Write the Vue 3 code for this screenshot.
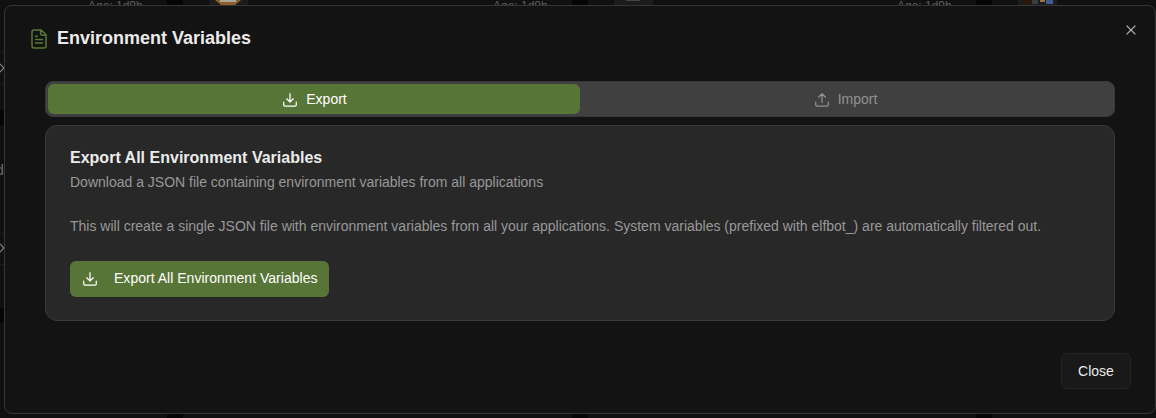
<script setup>
const columns = [
  { id: 'orange' },
  { id: 'grey' },
  { id: 'blocks' },
]
</script>

<template>
  <div class="page">
    <div class="backdrop" aria-hidden="true">
      <div v-for="(c, i) in columns" :key="c.id" class="column" :class="c.id">
        <span class="age">Age: 1d9h</span>
        <i class="gap"></i>
        <i class="thumb">
          <svg v-if="i === 0" width="26" height="6" viewBox="0 0 26 6"><path d="M0 0H26L20 5H6Z" fill="#8b6129" /><path d="M5 0H21V2H5Z" fill="#aaa59b" /></svg>
          <svg v-else-if="i === 1" width="14" height="6" viewBox="0 0 14 6"><path d="M0 .5H14" stroke="#444" /></svg>
          <svg v-else width="30" height="6" viewBox="0 0 30 6"><path d="M0 0H7V4H0Z" fill="#321509" /><path d="M8 0H14V4H8Z" fill="#344144" /><path d="M16 0H21V2H16Z" fill="#91763c" /><path d="M22 0H29V4H22Z" fill="#425994" /></svg>
        </i>
        <i class="gap low"></i>
      </div>
      <i class="edge one"></i>
      <i class="edge two"></i>
      <i class="rule r1"></i><i class="rule r2"></i><i class="rule r3"></i><i class="rule r4"></i>
      <svg class="diamond d1" width="12" height="12" viewBox="0 0 12 12"><path d="M6 1L11 6L6 11L1 6Z" /></svg>
      <svg class="diamond d2" width="12" height="12" viewBox="0 0 12 12"><path d="M6 1L11 6L6 11L1 6Z" /></svg>
      <span class="letter">d</span>
    </div>

    <section class="dialog" role="dialog" aria-label="Environment Variables">
      <header>
        <svg class="doc" viewBox="0 0 16 20" width="16" height="20"><path d="M10.2 1H3a2 2 0 0 0-2 2v14a2 2 0 0 0 2 2h10a2 2 0 0 0 2-2V5.8ZM9.6 1v3.3a2 2 0 0 0 2 2H15M4.5 7.2h1.8M4.5 10.5h7M4.5 14h7" /></svg>
        <h1>Environment Variables</h1>
        <button class="x" aria-label="Close dialog"><svg width="10" height="10" viewBox="0 0 10 10"><path d="M.6.6L9.4 9.4M9.4.6L.6 9.4" /></svg></button>
      </header>

      <div class="tabs">
        <button class="tab active">
          <svg class="tray" width="14" height="14" viewBox="0 0 14 14"><path d="M.7 9v2.8c0 .9.5 1.4 1.4 1.4h9.8c.9 0 1.4-.5 1.4-1.4V9M7 .7v8.2M3.7 5.8L7 9l3.3-3.2" /></svg>
          <span>Export</span>
        </button>
        <button class="tab">
          <svg class="tray" width="14" height="14" viewBox="0 0 14 14"><path d="M.7 9v2.8c0 .9.5 1.4 1.4 1.4h9.8c.9 0 1.4-.5 1.4-1.4V9M7 9.4V.9M3.7 4L7 .8 10.3 4" /></svg>
          <span>Import</span>
        </button>
      </div>

      <div class="card">
        <h2>Export All Environment Variables</h2>
        <p class="sub">Download a JSON file containing environment variables from all applications</p>
        <p class="info">This will create a single JSON file with environment variables from all your applications. System variables (prefixed with elfbot_) are automatically filtered out.</p>
        <button class="primary">
          <svg class="tray" width="14" height="14" viewBox="0 0 14 14"><path d="M.7 9v2.8c0 .9.5 1.4 1.4 1.4h9.8c.9 0 1.4-.5 1.4-1.4V9M7 .7v8.2M3.7 5.8L7 9l3.3-3.2" /></svg>
          <span>Export All Environment Variables</span>
        </button>
      </div>

      <footer><button class="close">Close</button></footer>
    </section>
  </div>
</template>

<style>
html, body { margin: 0; background: #101010; overflow: hidden; }
</style>

<style scoped>
* { box-sizing: border-box; }
.page { position: relative; width: 1156px; height: 418px; overflow: hidden; padding: 5px 0 0 4px; background: #101010; font-family: "Liberation Sans", Arial, sans-serif; }
button { font: inherit; margin: 0; padding: 0; border: 0; color: inherit; background: none; }
h1, h2, p { margin: 0; white-space: nowrap; }
svg { display: block; flex: none; fill: none; }

.backdrop { position: absolute; inset: 0; }
.column { position: absolute; top: 0; left: 0; width: 260px; height: 418px; }
.column.grey { left: 405px; }
.column.blocks { left: 809px; }
.age { position: absolute; left: 88px; top: -1px; font-size: 12px; line-height: 14px; color: #5c5c5c; white-space: nowrap; }
.gap { position: absolute; left: 167px; top: 0; width: 16px; height: 5px; background: #050505; }
.gap.low { top: 414px; height: 4px; }
.thumb { position: absolute; left: 209px; top: 0; width: 39px; height: 5px; padding-left: 6px; background: #1c1c1c; }
.grey .thumb { padding-left: 12px; }
.edge { position: absolute; left: 0; width: 4px; height: 15px; background: #050505; }
.one { top: 110px; }
.two { top: 308px; }
.rule { position: absolute; left: 0; width: 4px; height: 1px; background: #1c1c1c; }
.r1 { top: 52px; } .r2 { top: 84px; } .r3 { top: 233px; } .r4 { top: 264px; }
.diamond { position: absolute; left: -7px; stroke: #858585; stroke-width: 1.2; }
.d1 { top: 62px; } .d2 { top: 242px; }
.letter { position: absolute; left: -4px; top: 162px; font-size: 14px; line-height: 16px; color: #6d6d6d; }

.dialog { position: relative; width: 1152px; height: 409px; border: 1px solid #353535; border-radius: 8px; background: #131313; display: flex; flex-direction: column; }
header { height: 75px; flex: none; display: flex; align-items: flex-start; padding: 23px 19px 0 26px; }
.doc { stroke: #567a35; stroke-width: 1.5; stroke-linejoin: round; stroke-linecap: round; }
h1 { margin-left: 10px; margin-top: -3px; font-size: 18px; line-height: 24px; color: #ebebeb; font-weight: 700; }
.x { margin-left: auto; margin-top: -4px; }
.x svg { stroke: #b5b5b5; stroke-width: 1.3; }
.tabs { flex: none; margin: 0 40px; height: 36px; border: 1px solid #393939; border-radius: 8px; padding: 2px; background: #404040; display: grid; grid-template-columns: 1fr 1fr; }
.tab { display: flex; align-items: center; justify-content: center; gap: 9px; font-size: 14px; color: #929292; border-radius: 6px; }
.tab svg { margin-top: 1px; }
.tab.active { color: #fff; background: #587538; padding-left: 2px; }
.tab span { line-height: 20px; }
.tray { stroke: currentColor; stroke-width: 1.25; stroke-linecap: round; stroke-linejoin: round; }
.card { flex: none; margin: 8px 40px 0; height: 196px; border: 1px solid #3b3b3b; border-radius: 12px; background: #282828; padding: 20px 24px; display: flex; flex-direction: column; align-items: flex-start; }
h2 { font-size: 16px; line-height: 24px; color: #ebebeb; letter-spacing: .01px; }
.sub, .info { color: #989898; font-size: 14px; line-height: 20px; }
.sub { margin-top: 2px; }
.info { margin-top: 24px; }
.primary { margin-top: 25px; height: 36px; width: 259px; border-radius: 6px; background: #587538; color: #fff; display: flex; align-items: center; padding-left: 13px; gap: 17px; font-size: 14px; letter-spacing: .02px; white-space: nowrap; }
.primary span { position: relative; top: -1px; }
footer { display: flex; justify-content: flex-end; padding: 32px 24px 0 0; }
.close { width: 70px; height: 36px; border: 1px solid #252525; border-radius: 6px; background: #191919; color: #ebebeb; font-size: 14px; padding-bottom: 1px; }
</style>
